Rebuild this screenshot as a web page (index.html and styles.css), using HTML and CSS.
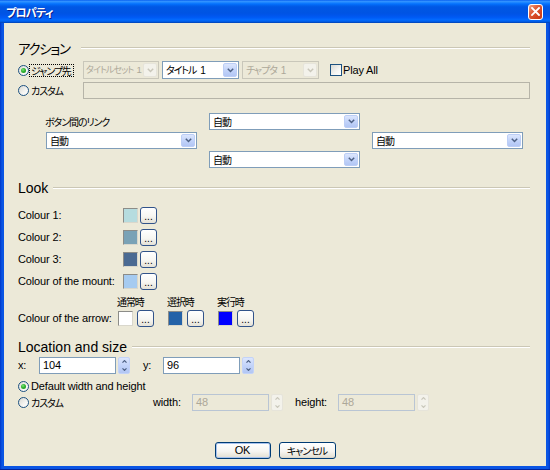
FILE: index.html
```html
<!DOCTYPE html>
<html lang="ja">
<head>
<meta charset="utf-8">
<title>プロパティ</title>
<link rel="stylesheet" href="styles.css">
</head>
<body>
<div class="window">
  <div class="titlebar">
    <span class="title">プロパティ</span>
    <span class="close"><svg width="9" height="9" viewBox="0 0 9 9"><path d="M1 1L8 8M8 1L1 8" stroke="#fff" stroke-width="1.8" stroke-linecap="square"/></svg></span>
  </div>
  <div class="content">
    <div class="ghead"><span class="gtitle jt">アクション</span><span class="rule"></span></div>

    <div class="row r-jump">
      <span class="lead"><span class="radio on"></span><span class="focus ja">ジャンプ先</span></span>
      <div class="combo dis w76"><span class="val ja tight">タイトルセット<span class="num">1</span></span><span class="arr"><svg width="7" height="5" viewBox="0 0 7 5"><path d="M0.8 0.8L3.5 3.5L6.2 0.8" fill="none" stroke="#C9C7BA" stroke-width="1.5"/></svg></span></div>
      <div class="combo w77"><span class="val ja">タイトル<span class="num">1</span></span><span class="arr"><svg width="7" height="5" viewBox="0 0 7 5"><path d="M0.8 0.8L3.5 3.5L6.2 0.8" fill="none" stroke="#4D6185" stroke-width="1.5"/></svg></span></div>
      <div class="combo dis w77"><span class="val ja">チャプタ<span class="num">1</span></span><span class="arr"><svg width="7" height="5" viewBox="0 0 7 5"><path d="M0.8 0.8L3.5 3.5L6.2 0.8" fill="none" stroke="#C9C7BA" stroke-width="1.5"/></svg></span></div>
      <label class="chk"><span class="box"></span>Play All</label>
    </div>

    <div class="row r-custom">
      <span class="lead"><span class="radio"></span><span class="rl ja">カスタム</span></span>
      <div class="field dis grow"></div>
    </div>

    <div class="links">
      <span class="lbl ja">ボタン間のリンク</span>
      <div class="combo c-top"><span class="val ja">自動</span><span class="arr"><svg width="7" height="5" viewBox="0 0 7 5"><path d="M0.8 0.8L3.5 3.5L6.2 0.8" fill="none" stroke="#4D6185" stroke-width="1.5"/></svg></span></div>
      <div class="combo c-left"><span class="val ja">自動</span><span class="arr"><svg width="7" height="5" viewBox="0 0 7 5"><path d="M0.8 0.8L3.5 3.5L6.2 0.8" fill="none" stroke="#4D6185" stroke-width="1.5"/></svg></span></div>
      <div class="combo c-right"><span class="val ja">自動</span><span class="arr"><svg width="7" height="5" viewBox="0 0 7 5"><path d="M0.8 0.8L3.5 3.5L6.2 0.8" fill="none" stroke="#4D6185" stroke-width="1.5"/></svg></span></div>
      <div class="combo c-bottom"><span class="val ja">自動</span><span class="arr"><svg width="7" height="5" viewBox="0 0 7 5"><path d="M0.8 0.8L3.5 3.5L6.2 0.8" fill="none" stroke="#4D6185" stroke-width="1.5"/></svg></span></div>
    </div>

    <div class="ghead g-look"><span class="gtitle">Look</span><span class="rule"></span></div>

    <div class="colours">
      <span class="lbl">Colour 1:</span><span class="swatch" style="background:#B6DCDF"></span><span class="dots">...</span>
      <span class="lbl">Colour 2:</span><span class="swatch" style="background:#7AA2B6"></span><span class="dots">...</span>
      <span class="lbl">Colour 3:</span><span class="swatch" style="background:#4B6A92"></span><span class="dots">...</span>
      <span class="lbl">Colour of the mount:</span><span class="swatch" style="background:#A6CBF0"></span><span class="dots">...</span>
    </div>

    <div class="arrows">
      <span class="hd h1 ja">通常時</span>
      <span class="hd h2 ja">選択時</span>
      <span class="hd h3 ja">実行時</span>
      <span class="lbl">Colour of the arrow:</span>
      <span class="pair"><span class="swatch" style="background:#FFFFFF"></span><span class="dots">...</span></span>
      <span class="pair"><span class="swatch" style="background:#2462A8"></span><span class="dots">...</span></span>
      <span class="pair"><span class="swatch" style="background:#0000FF"></span><span class="dots">...</span></span>
    </div>

    <div class="ghead g-loc"><span class="gtitle">Location and size</span><span class="rule"></span></div>

    <div class="row xy">
      <span class="k kx">x:</span>
      <div class="field w77">104</div>
      <span class="spin"><i><svg width="5" height="3" viewBox="0 0 5 3"><path d="M0.5 2.6L2.5 0.6L4.5 2.6" fill="none" stroke="#4D6185" stroke-width="1.2"/></svg></i><i><svg width="5" height="3" viewBox="0 0 5 3"><path d="M0.5 0.4L2.5 2.4L4.5 0.4" fill="none" stroke="#4D6185" stroke-width="1.2"/></svg></i></span>
      <span class="k ky">y:</span>
      <div class="field w77">96</div>
      <span class="spin"><i><svg width="5" height="3" viewBox="0 0 5 3"><path d="M0.5 2.6L2.5 0.6L4.5 2.6" fill="none" stroke="#4D6185" stroke-width="1.2"/></svg></i><i><svg width="5" height="3" viewBox="0 0 5 3"><path d="M0.5 0.4L2.5 2.4L4.5 0.4" fill="none" stroke="#4D6185" stroke-width="1.2"/></svg></i></span>
    </div>

    <div class="row r-default">
      <span class="radio on"></span><span class="rl">Default width and height</span>
    </div>

    <div class="row r-size">
      <span class="lead2"><span class="radio"></span><span class="rl ja">カスタム</span></span>
      <span class="k kw">width:</span>
      <div class="field dis w77">48</div>
      <span class="spin dis"><i><svg width="5" height="3" viewBox="0 0 5 3"><path d="M0.5 2.6L2.5 0.6L4.5 2.6" fill="none" stroke="#C9C7BA" stroke-width="1.2"/></svg></i><i><svg width="5" height="3" viewBox="0 0 5 3"><path d="M0.5 0.4L2.5 2.4L4.5 0.4" fill="none" stroke="#C9C7BA" stroke-width="1.2"/></svg></i></span>
      <span class="k kh">height:</span>
      <div class="field dis w77">48</div>
      <span class="spin dis"><i><svg width="5" height="3" viewBox="0 0 5 3"><path d="M0.5 2.6L2.5 0.6L4.5 2.6" fill="none" stroke="#C9C7BA" stroke-width="1.2"/></svg></i><i><svg width="5" height="3" viewBox="0 0 5 3"><path d="M0.5 0.4L2.5 2.4L4.5 0.4" fill="none" stroke="#C9C7BA" stroke-width="1.2"/></svg></i></span>
    </div>

    <div class="actions">
      <button class="btn ok">OK</button>
      <button class="btn cancel">キャンセル</button>
    </div>
  </div>
</div>
</body>
</html>
```

FILE: styles.css
```css
* { box-sizing: border-box; }
html, body { margin: 0; padding: 0; }
body {
  width: 550px;
  height: 470px;
  overflow: hidden;
  background: #ffffff;
  font-family: "Liberation Sans", "Noto Sans CJK JP", sans-serif;
  font-size: 11px;
  letter-spacing: -0.15px;
  color: #000;
}
.ja {
  font-family: "Noto Sans CJK JP", sans-serif;
  font-size: 10px;
  letter-spacing: -1.1px;
  font-feature-settings: "palt";
}
.num {
  font-family: "Liberation Sans", sans-serif;
  font-size: 10px;
  letter-spacing: 0;
  margin-left: 4px;
}

.window {
  width: 550px;
  height: 470px;
  display: flex;
  flex-direction: column;
  padding: 0 4px 4px;
  background: linear-gradient(90deg, #0036C8 0, #0A55E4 2px, #0A55E4 calc(100% - 2px), #0036C8 100%);
  box-shadow: inset 0 -1px 0 #00249E;
}

.titlebar {
  margin: 0 -4px;
  height: 23px;
  flex: none;
  display: flex;
  align-items: center;
  justify-content: space-between;
  padding: 0 4px 0 6px;
  background: linear-gradient(180deg,
    #0058EE 0%, #3593FF 5%, #288EFF 9%, #127DFF 13%, #036FFC 18%,
    #0262EE 24%, #0057E5 30%, #0054E3 56%, #0055EB 66%, #005BF5 76%,
    #026AFE 86%, #0062EF 92%, #0052D6 96%, #0040AB 100%);
}
.title {
  color: #fff;
  font-family: "Noto Sans CJK JP", sans-serif;
  font-weight: bold;
  font-size: 11px;
  letter-spacing: -0.8px;
  font-feature-settings: "palt";
  line-height: 14px;
  text-shadow: 1px 1px 0 #0A1E8C;
}
.close {
  width: 15px;
  height: 16px;
  margin-right: 3px;
  border: 1px solid #fff;
  border-radius: 3px;
  background: linear-gradient(135deg, #F0A58A 0%, #E0603C 35%, #D3441F 70%, #C33A1A 100%);
  display: flex;
  align-items: center;
  justify-content: center;
}

.content {
  flex: 1;
  background: #ECE9D8;
  padding: 17px 16px 0 14px;
  display: flex;
  flex-direction: column;
}

.ghead {
  display: flex;
  align-items: center;
  height: 16px;
  gap: 5px;
}
.gtitle {
  font-size: 14px;
  line-height: 16px;
  letter-spacing: 0;
  white-space: nowrap;
}
.gtitle.jt {
  font-family: "Noto Sans CJK JP", sans-serif;
  font-size: 13.5px;
  letter-spacing: -1.4px;
  font-feature-settings: "palt";
  margin-right: 6px;
}
.rule {
  flex: 1;
  height: 2px;
  border-top: 1px solid #CBC7B5;
  border-bottom: 1px solid #FFFFFF;
}
.g-look { margin-top: 12px; }
.g-loc { margin-top: 12px; }

.row { display: flex; align-items: center; }
.lead { width: 65px; flex: none; display: flex; align-items: center; }
.lead2 { width: 135px; flex: none; display: flex; align-items: center; }

.radio {
  width: 11px;
  height: 11px;
  flex: none;
  border-radius: 50%;
  border: 1px solid #1C5180;
  background: linear-gradient(135deg, #D8D8D2 0%, #F5F5F2 60%, #FFFFFF 100%);
  display: flex;
  align-items: center;
  justify-content: center;
}
.radio.on::after {
  content: "";
  width: 5px;
  height: 5px;
  border-radius: 50%;
  background: radial-gradient(circle at 40% 35%, #7BE37B 0%, #2FB32F 45%, #1A8A1A 100%);
}
.rl { margin-left: 2px; line-height: 12px; white-space: nowrap; }
.focus {
  margin-left: 1px;
  padding: 0 2px 0 1px;
  line-height: 11px;
  outline: 1px dotted #000;
  outline-offset: 0;
  white-space: nowrap;
}

.r-jump { margin-top: 5px; height: 18px; }
.r-custom { margin-top: 3px; height: 17px; }

.combo {
  height: 18px;
  border: 1px solid #7F9DB9;
  background: #fff;
  display: flex;
  align-items: center;
  flex: none;
}
.combo .val {
  flex: 1;
  padding-left: 3px;
  line-height: 14px;
  white-space: nowrap;
  overflow: hidden;
}
.combo .val.tight { padding-left: 2px; font-size: 9px; letter-spacing: -0.9px; }
.combo .val.tight .num { margin-left: 3px; font-size: 9.5px; }
.combo .arr {
  width: 14px;
  height: 14px;
  margin-right: 1px;
  border-radius: 2px;
  border: 1px solid #BCCEF6;
  background: linear-gradient(180deg, #DCE6FD 0%, #C3D4FA 50%, #B2C6F4 100%);
  display: flex;
  align-items: center;
  justify-content: center;
  flex: none;
}
.combo.dis { border-color: #C9C7BA; background: #ECE9D8; color: #ACA899; }
.combo.dis .arr { border-color: #E6E4DA; background: #F3F2EB; }
.w76 { width: 76px; }
.w77 { width: 77px; }
.r-jump .combo + .combo { margin-left: 3px; }

.chk { display: flex; align-items: center; margin-left: 11px; white-space: nowrap; line-height: 12px; }
.box {
  width: 12px;
  height: 12px;
  margin-right: 1px;
  border: 1px solid #1C5180;
  background: linear-gradient(135deg, #D8D8D2 0%, #F5F5F2 60%, #FFFFFF 100%);
}

.field {
  height: 17px;
  border: 1px solid #7F9DB9;
  background: #fff;
  padding-left: 3px;
  line-height: 15px;
  flex: none;
}
.field.dis { border-color: #B9C5D4; background: #ECE9D8; color: #ACA899; }
.r-custom .field.dis { border-color: #B6B4A8; }
.grow { flex: 1; }

.links {
  margin-top: 14px;
  margin-left: 28px;
  display: grid;
  grid-template-columns: 151px 151px 151px;
  grid-template-rows: 17px 17px 17px;
  column-gap: 12px;
  row-gap: 2px;
}
.links .combo { height: 17px; }
.links .combo .arr { height: 13px; }
.links .lbl { grid-row: 1; grid-column: 1; align-self: center; margin-left: -1px; line-height: 12px; }
.c-top { grid-row: 1; grid-column: 2; }
.c-left { grid-row: 2; grid-column: 1; }
.c-right { grid-row: 2; grid-column: 3; }
.c-bottom { grid-row: 3; grid-column: 2; }

.colours {
  margin-top: 11px;
  display: grid;
  grid-template-columns: 105px 17px 17px;
  grid-auto-rows: 17px;
  row-gap: 5px;
  align-items: center;
}
.lbl { line-height: 13px; white-space: nowrap; }
.swatch {
  width: 15px;
  height: 15px;
  border: 1px solid;
  border-color: #8C8C88 #D9D7CC #D9D7CC #8C8C88;
}
.dots {
  width: 17px;
  height: 17px;
  border: 1px solid #31538A;
  border-radius: 3px;
  background: linear-gradient(180deg, #FFFFFF 0%, #F7F6F2 55%, #E4E1D6 100%);
  font-size: 10px;
  letter-spacing: 0;
  line-height: 17px;
  text-align: center;
  color: #000;
}

.arrows {
  margin-top: 6px;
  display: grid;
  grid-template-columns: 100px 50px 50px 50px;
  grid-template-rows: 12px 17px;
  row-gap: 2px;
}
.arrows .hd { grid-row: 1; margin-left: -1px; line-height: 12px; white-space: nowrap; }
.h1 { grid-column: 2; }
.h2 { grid-column: 3; }
.h3 { grid-column: 4; }
.arrows .lbl { grid-row: 2; grid-column: 1; align-self: center; }
.pair { grid-row: 2; display: flex; align-items: center; gap: 4px; }

.xy { margin-top: 2px; height: 17px; }
.k { line-height: 13px; flex: none; }
.kx { width: 21px; }
.ky { width: 20px; margin-left: 13px; }
.kw { width: 39px; }
.kh { width: 43px; margin-left: 12px; }

.spin {
  width: 12px;
  height: 17px;
  margin-left: 2px;
  flex: none;
  display: flex;
  flex-direction: column;
  border-radius: 2px;
  border: 1px solid #C3D3F8;
  background: linear-gradient(180deg, #DCE6FD 0%, #C3D4FA 50%, #B2C6F4 100%);
}
.spin i {
  flex: 1;
  display: flex;
  align-items: center;
  justify-content: center;
}
.spin.dis { border-color: #E6E4DA; background: #F3F2EB; }

.r-default { margin-top: 6px; height: 12px; }
.r-size { margin-top: 2px; height: 17px; }

.actions {
  margin-top: 31px;
  margin-left: 2px;
  display: flex;
  justify-content: center;
  gap: 8px;
}
.btn {
  height: 17px;
  padding: 0;
  border: 1px solid #003C74;
  border-radius: 3px;
  background: linear-gradient(180deg, #FFFFFF 0%, #F6F5F1 55%, #E6E3D8 90%, #D6D0C5 100%);
  font-family: "Liberation Sans", "Noto Sans CJK JP", sans-serif;
  font-size: 11px;
  letter-spacing: -0.3px;
  line-height: 15px;
  color: #000;
}
.btn.ok { width: 56px; box-shadow: inset 0 0 0 1px #A7C2EE; }
.btn.cancel { width: 57px; font-family: "Noto Sans CJK JP", sans-serif; font-size: 10px; letter-spacing: -1px; font-feature-settings: "palt"; }
```
